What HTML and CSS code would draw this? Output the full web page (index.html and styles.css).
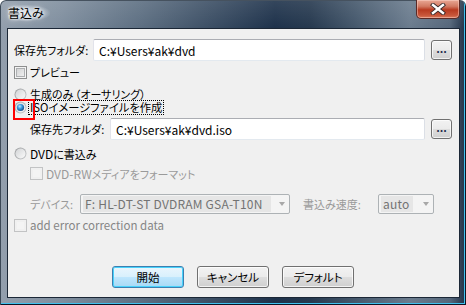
FILE: index.html
```html
<!DOCTYPE html>
<html lang="ja">
<head>
<meta charset="utf-8">
<link rel="stylesheet" href="styles.css">
</head>
<body>
<svg class="defs" width="0" height="0">
  <defs>
    <linearGradient id="rOuter" x1="0" y1="0" x2="1" y2="1">
      <stop offset="0" stop-color="#9a9c9e"/>
      <stop offset="1" stop-color="#c9cbcd"/>
    </linearGradient>
    <linearGradient id="rInner" x1="0" y1="0" x2="1" y2="1">
      <stop offset="0" stop-color="#d2d4d6"/>
      <stop offset="1" stop-color="#fbfbfb"/>
    </linearGradient>
    <radialGradient id="rDot" cx="0.4" cy="0.35" r="0.7">
      <stop offset="0" stop-color="#b8ecff"/>
      <stop offset="0.45" stop-color="#3a9be0"/>
      <stop offset="1" stop-color="#0d3f7a"/>
    </radialGradient>
  </defs>
</svg>
<div class="window">
  <div class="titlebar">
    <span class="title">書込み</span>
    <div class="close">
      <svg width="16" height="12" viewBox="0 0 16 12"><path d="M3 2 L13 10 M13 2 L3 10" stroke="#3a2a2a" stroke-width="4.2" stroke-linecap="square" fill="none"/><path d="M3 2 L13 10 M13 2 L3 10" stroke="#ffffff" stroke-width="2.4" stroke-linecap="square" fill="none"/></svg>
    </div>
  </div>
  <div class="client">
    <div class="row r1">
      <span class="label lab1">保存先フォルダ:</span>
      <div class="input">C:¥Users¥ak¥dvd</div>
      <div class="browse">...</div>
    </div>
    <div class="row r2">
      <span class="check"></span>
      <span class="txt">プレビュー</span>
    </div>
    <div class="row r3">
      <svg class="radio" width="13" height="13" viewBox="0 0 13 13"><circle cx="6.5" cy="6.5" r="6" fill="url(#rOuter)"/><circle cx="6.5" cy="6.5" r="5" fill="url(#rInner)"/></svg>
      <span class="txt">生成のみ <span class="paren">（オーサリング）</span></span>
    </div>
    <div class="row r4">
      <svg class="radio" width="13" height="13" viewBox="0 0 13 13"><circle cx="6.5" cy="6.5" r="6" fill="url(#rOuter)"/><circle cx="6.5" cy="6.5" r="5" fill="url(#rInner)"/><circle cx="6.5" cy="6.5" r="3.6" fill="url(#rDot)"/></svg>
      <span class="txt focus">ISOイメージファイルを作成</span>
    </div>
    <div class="row r5">
      <span class="label lab2">保存先フォルダ:</span>
      <div class="input">C:¥Users¥ak¥dvd.iso</div>
      <div class="browse">...</div>
    </div>
    <div class="row r6">
      <svg class="radio" width="13" height="13" viewBox="0 0 13 13"><circle cx="6.5" cy="6.5" r="6" fill="url(#rOuter)"/><circle cx="6.5" cy="6.5" r="5" fill="url(#rInner)"/></svg>
      <span class="txt"><span class="lat">DVD</span>に書込み</span>
    </div>
    <div class="row r7">
      <span class="check disabled"></span>
      <span class="txt dis"><span class="lat">DVD-RW</span>メディアをフォーマット</span>
    </div>
    <div class="row r8">
      <span class="label dis lab3">デバイス:</span>
      <div class="combo combo-dev"><span class="sel">F: HL-DT-ST DVDRAM GSA-T10N</span><span class="arrow"></span></div>
      <span class="label dis lab4">書込み速度:</span>
      <div class="combo combo-speed"><span class="sel">auto</span><span class="arrow"></span></div>
    </div>
    <div class="row r9">
      <span class="check disabled"></span>
      <span class="txt dis2 latin">add error correction data</span>
    </div>
    <div class="buttons">
      <div class="btn default">開始</div>
      <div class="btn">キャンセル</div>
      <div class="btn">デフォルト</div>
    </div>
  </div>
</div>
<div class="annot"></div>
</body>
</html>
```
FILE: styles.css
```css
html, body {
  margin: 0;
  padding: 0;
}
body {
  width: 466px;
  height: 305px;
  overflow: hidden;
  position: relative;
  font-family: "Noto Sans CJK JP", "Noto Sans", sans-serif;
  font-size: 11px;
  font-feature-settings: "palt";
  color: #000;
  background: #fff;
}
.defs {
  position: absolute;
}
.window {
  width: 466px;
  height: 305px;
  box-sizing: border-box;
  padding: 0 6px 7px 7px;
  display: flex;
  flex-direction: column;
  border-radius: 6px 6px 0 0;
  background:
    linear-gradient(180deg, rgba(255,255,255,0.10) 0, rgba(255,255,255,0) 28px),
    linear-gradient(90deg, #939fad 0, #808f9f 60px, #5d6f82 140px, #3c4f65 210px, #1e324b 275px, #26394f 310px, #485b6f 360px, #6b7c8e 410px, #55677b 450px, #1d2e44 466px);
  box-shadow: inset 1px 0 0 #3b4856, inset 0 1px 0 #46525f, inset -1px -1px 0 #0b1626, inset -2px -2px 0 #41c2ee;
}
.titlebar {
  height: 28px;
  display: flex;
  align-items: flex-start;
}
.title {
  margin-top: 5px;
  margin-left: 1px;
  font-size: 12px;
  line-height: 16px;
  font-feature-settings: normal;
  color: #000;
  padding: 0 6px 0 0;
  background: radial-gradient(ellipse at 40% 50%, rgba(230,236,242,0.85) 0, rgba(220,228,236,0.55) 45%, rgba(200,210,220,0) 75%);
  text-shadow: 0 0 6px #fff, 0 0 3px #fff;
}
.close {
  margin-left: auto;
  width: 44px;
  height: 19px;
  box-sizing: border-box;
  border: 1px solid #5a2a26;
  border-top: none;
  border-radius: 0 0 5px 5px;
  background: linear-gradient(180deg, #e9a895 0, #d27a63 35%, #b83a20 55%, #c8563a 85%, #d9785a 100%);
  box-shadow: inset 0 0 0 1px rgba(255,220,210,0.45);
  display: flex;
  align-items: center;
  justify-content: center;
}
.client {
  flex: 1;
  background: #f0f0f0;
  border: 1px solid #1b2736;
  display: flex;
  flex-direction: column;
  padding: 0 7px 0 6px;
}
.row {
  display: flex;
  align-items: center;
  flex-shrink: 0;
}
.label {
  white-space: nowrap;
  line-height: 14px;
}
.lab1 { width: 79px; }
.lab2 { width: 80px; }
.lab3 { width: 50px; }
.lab4 { width: 75px; margin-left: 13px; }
.input {
  flex: 1;
  height: 22px;
  box-sizing: border-box;
  background: #fff;
  border: 1px solid #abadb3;
  border-bottom-color: #e3e9ef;
  border-left-color: #e2e3ea;
  border-right-color: #dbdfe6;
  border-radius: 2px;
  padding: 0 5px;
  display: flex;
  align-items: center;
  font-size: 12px;
  white-space: nowrap;
}
.browse {
  width: 21px;
  height: 20px;
  margin-left: 6px;
  box-sizing: border-box;
  border: 1px solid #707070;
  border-radius: 3px;
  background: linear-gradient(180deg, #f2f2f2 0, #ebebeb 48%, #dddddd 52%, #cfcfcf 100%);
  box-shadow: inset 0 0 0 1px rgba(255,255,255,0.7);
  font-size: 11px;
  font-weight: bold;
  line-height: 14px;
  text-align: center;
  color: #1c2c4c;
}
.r1 { margin-top: 10px; height: 22px; }
.r2 { margin-top: 5px; height: 13px; }
.r3 { margin-top: 9px; height: 13px; }
.r4 { margin-top: 0; height: 13px; }
.r5 { margin-top: 4px; height: 22px; padding-left: 16px; }
.r6 { margin-top: 7px; height: 13px; }
.r7 { margin-top: 7px; height: 13px; padding-left: 16px; }
.r8 { margin-top: 14px; height: 20px; padding-left: 16px; }
.r9 { margin-top: 5px; height: 13px; }
.check {
  width: 13px;
  height: 13px;
  box-sizing: border-box;
  border: 1px solid #8e8f8f;
  box-shadow: inset 0 0 0 1px #f4f4f4, inset 0 0 0 2px #aeb0b2;
  background-color: #f4f4f4;
  background-image: linear-gradient(135deg, #cbcccd, #f7f7f7);
  background-clip: content-box;
  padding: 2px;
  flex-shrink: 0;
}
.check.disabled {
  border-color: #c2c3c4;
  background-image: none;
  background-color: #f4f4f4;
  box-shadow: none;
}
.radio {
  flex-shrink: 0;
  display: block;
}
.txt {
  margin-left: 3px;
  white-space: nowrap;
  line-height: 13px;
}
.lat {
  font-size: 12px;
}
.paren {
  margin-left: -1px;
}
.focus {
  outline: 1px dotted #000;
  outline-offset: 0;
  margin-left: 2px;
  padding: 0 1px;
  font-size: 11.3px;
}
.latin {
  font-size: 11.5px;
}
.dis { color: #9a9a9a; }
.dis2 { color: #858585; }
.combo {
  height: 20px;
  box-sizing: border-box;
  border: 1px solid #adb2b5;
  border-radius: 2px;
  background: #f4f4f4;
  display: flex;
  align-items: center;
  padding-left: 2px;
}
.combo-dev { width: 210px; }
.combo-speed { width: 56px; }
.sel {
  background: #e6e6e6;
  color: #737373;
  height: 16px;
  line-height: 16px;
  padding: 0 2px;
  white-space: nowrap;
  overflow: hidden;
  box-sizing: border-box;
  font-size: 12px;
  letter-spacing: 0.2px;
}
.combo-dev .sel { width: 188px; }
.combo-speed .sel { width: 32px; }
.arrow {
  margin-left: auto;
  margin-right: 4px;
  width: 0;
  height: 0;
  border-left: 3.5px solid transparent;
  border-right: 3.5px solid transparent;
  border-top: 4px solid #a8a8a8;
}
.buttons {
  display: flex;
  justify-content: center;
  gap: 13px;
  margin-top: 34px;
  flex-shrink: 0;
}
.btn {
  width: 72px;
  height: 22px;
  box-sizing: border-box;
  border: 1px solid #707070;
  border-radius: 3px;
  background: linear-gradient(180deg, #f2f2f2 0, #ebebeb 48%, #dddddd 52%, #cfcfcf 100%);
  box-shadow: inset 0 0 0 1px rgba(255,255,255,0.75);
  display: flex;
  align-items: center;
  justify-content: center;
  white-space: nowrap;
  font-size: 11.5px;
}
.btn.default {
  border-color: #3c7fb1;
  background: linear-gradient(180deg, #eaf6fd 0, #d9f0fc 48%, #bee6fd 52%, #a7d9f5 100%);
  box-shadow: inset 0 0 0 1px #48d2fb;
}
.annot {
  position: absolute;
  left: 13px;
  top: 99px;
  width: 22px;
  height: 21px;
  box-sizing: border-box;
  border: 2px solid #ff0000;
}
```
